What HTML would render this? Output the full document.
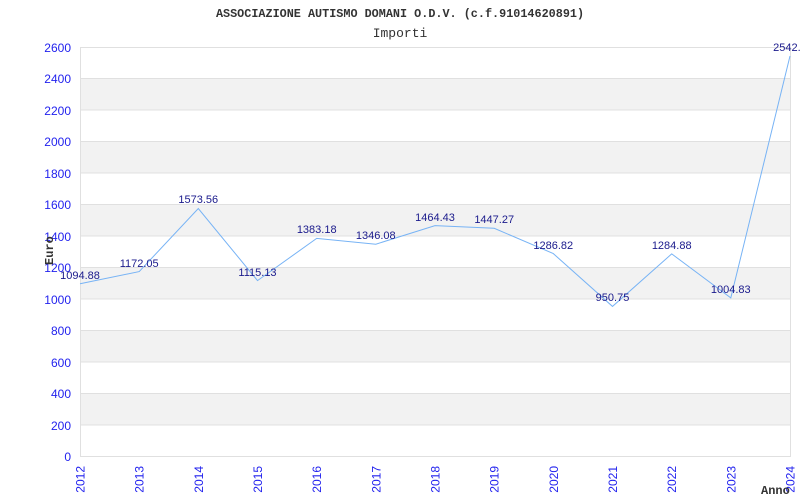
<!DOCTYPE html>
<html><head><meta charset="utf-8"><style>
html,body{margin:0;padding:0;background:#fff;}
svg{display:block;}
</style></head><body>
<svg width="800" height="500" xmlns="http://www.w3.org/2000/svg">
<rect width="800" height="500" fill="#fff"/>
<text x="400" y="17" text-anchor="middle" font-family="Liberation Mono, monospace" font-weight="bold" font-size="11.8" fill="#333">ASSOCIAZIONE AUTISMO DOMANI O.D.V. (c.f.91014620891)</text>
<text x="400" y="37" text-anchor="middle" font-family="Liberation Mono, monospace" font-size="13" fill="#333">Importi</text>
<g fill="#f2f2f2">
<rect x="80" y="78.5" width="710" height="31.5"/>
<rect x="80" y="141.4" width="710" height="31.5"/>
<rect x="80" y="204.3" width="710" height="31.5"/>
<rect x="80" y="267.2" width="710" height="31.5"/>
<rect x="80" y="330.1" width="710" height="31.5"/>
<rect x="80" y="393" width="710" height="31.5"/>
</g>
<g stroke="#e0e0e0" stroke-width="1">
<line x1="80" y1="47.5" x2="790" y2="47.5"/>
<line x1="80" y1="78.5" x2="790" y2="78.5"/>
<line x1="80" y1="110" x2="790" y2="110"/>
<line x1="80" y1="141.5" x2="790" y2="141.5"/>
<line x1="80" y1="173" x2="790" y2="173"/>
<line x1="80" y1="204.5" x2="790" y2="204.5"/>
<line x1="80" y1="236" x2="790" y2="236"/>
<line x1="80" y1="267.5" x2="790" y2="267.5"/>
<line x1="80" y1="299" x2="790" y2="299"/>
<line x1="80" y1="330.5" x2="790" y2="330.5"/>
<line x1="80" y1="362" x2="790" y2="362"/>
<line x1="80" y1="393.5" x2="790" y2="393.5"/>
<line x1="80" y1="425" x2="790" y2="425"/>
<line x1="80" y1="456.5" x2="790" y2="456.5"/>
<line x1="80.5" y1="47" x2="80.5" y2="457"/>
<line x1="790.5" y1="47" x2="790.5" y2="457"/>
</g>
<g font-family="Liberation Sans, sans-serif" font-size="12" fill="#2222ee" text-anchor="end">
<text x="71" y="52">2600</text><text x="71" y="83">2400</text><text x="71" y="115">2200</text>
<text x="71" y="146">2000</text><text x="71" y="178">1800</text><text x="71" y="209">1600</text>
<text x="71" y="241">1400</text><text x="71" y="272">1200</text><text x="71" y="304">1000</text>
<text x="71" y="335">800</text><text x="71" y="367">600</text><text x="71" y="398">400</text>
<text x="71" y="430">200</text><text x="71" y="461">0</text>
</g>
<g font-family="Liberation Sans, sans-serif" font-size="12" fill="#2222ee" text-anchor="end">
<text transform="translate(84.5,466) rotate(-90)">2012</text>
<text transform="translate(143.7,466) rotate(-90)">2013</text>
<text transform="translate(202.8,466) rotate(-90)">2014</text>
<text transform="translate(262,466) rotate(-90)">2015</text>
<text transform="translate(321.2,466) rotate(-90)">2016</text>
<text transform="translate(380.3,466) rotate(-90)">2017</text>
<text transform="translate(439.5,466) rotate(-90)">2018</text>
<text transform="translate(498.7,466) rotate(-90)">2019</text>
<text transform="translate(557.8,466) rotate(-90)">2020</text>
<text transform="translate(617,466) rotate(-90)">2021</text>
<text transform="translate(676.2,466) rotate(-90)">2022</text>
<text transform="translate(735.3,466) rotate(-90)">2023</text>
<text transform="translate(794.5,466) rotate(-90)">2024</text>
</g>
<text transform="translate(53,265) rotate(-90)" font-family="Liberation Mono, monospace" font-weight="bold" font-size="12" fill="#333">Euro</text>
<text x="761" y="494" font-family="Liberation Mono, monospace" font-weight="bold" font-size="12" fill="#333">Anno</text>
<polyline fill="none" stroke="#77b3f5" stroke-width="1" points="80,283.8 139.2,271.6 198.3,208.5 257.5,280.6 316.7,238.4 375.8,244.2 435,225.6 494.2,228.3 553.3,253.6 612.5,306.4 671.7,253.9 730.8,297.9 790,56"/>
<g font-family="Liberation Sans, sans-serif" font-size="11" fill="#1a1a8c" text-anchor="middle">
<text x="80" y="279">1094.88</text>
<text x="139.2" y="267">1172.05</text>
<text x="198.3" y="203">1573.56</text>
<text x="257.5" y="276">1115.13</text>
<text x="316.7" y="233">1383.18</text>
<text x="375.8" y="239">1346.08</text>
<text x="435" y="221">1464.43</text>
<text x="494.2" y="223">1447.27</text>
<text x="553.3" y="249">1286.82</text>
<text x="612.5" y="301">950.75</text>
<text x="671.7" y="249">1284.88</text>
<text x="730.8" y="293">1004.83</text>
<text x="790" y="51">2542.6</text>
</g>
</svg>
</body></html>
